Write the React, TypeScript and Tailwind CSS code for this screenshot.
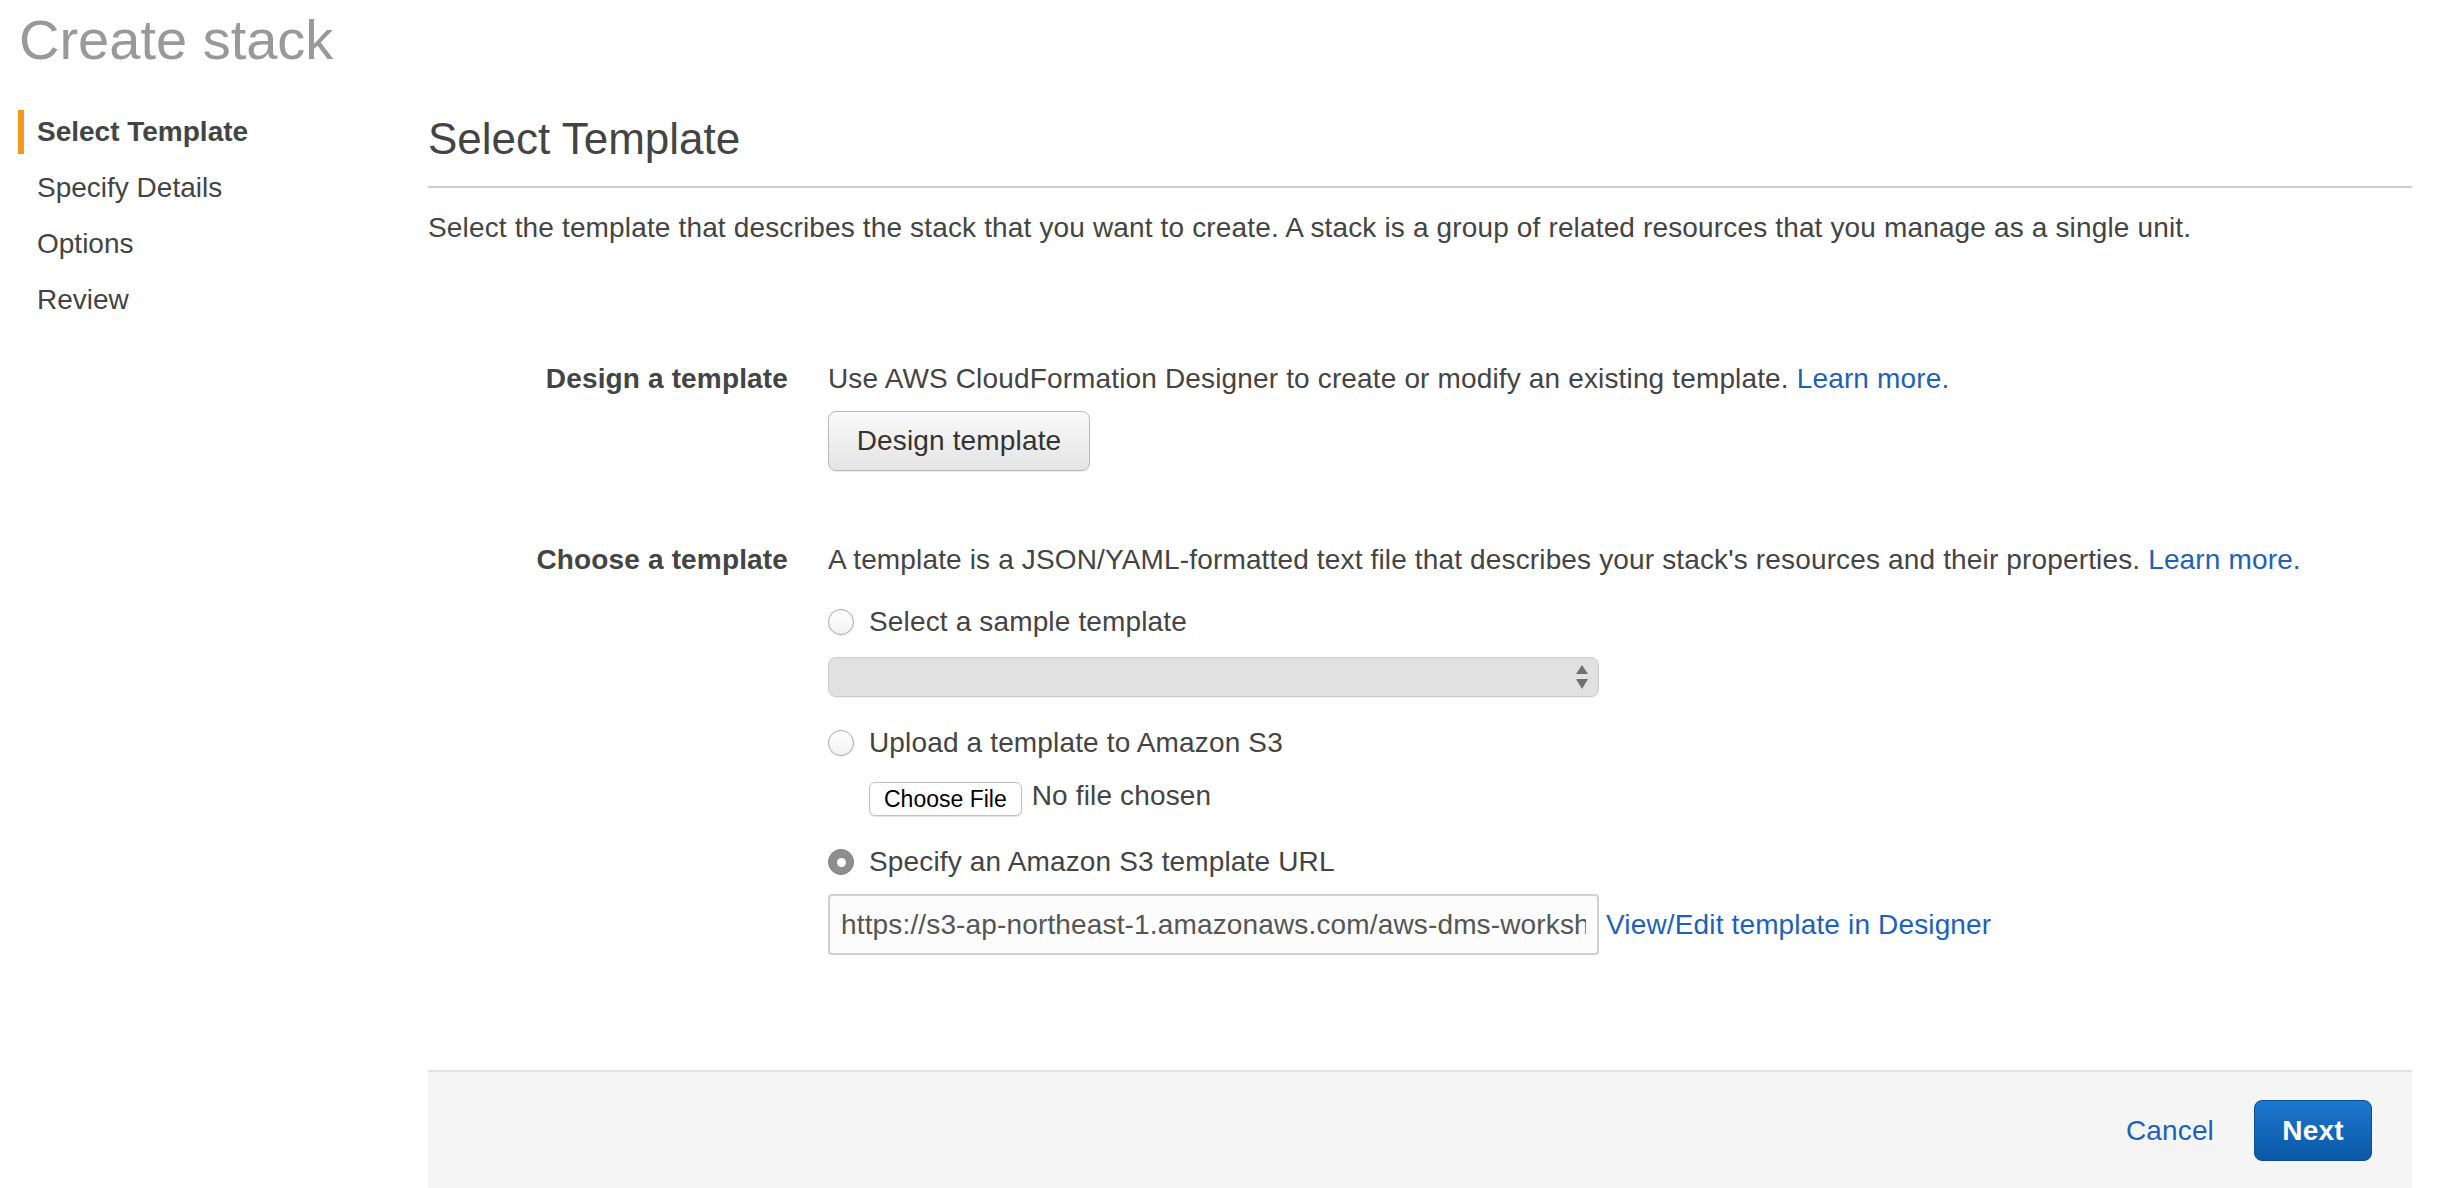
const font = "font-['Liberation_Sans',Arial,Helvetica,sans-serif]";

const steps = ["Select Template", "Specify Details", "Options", "Review"];

function Radio({ checked }: { checked?: boolean }) {
  if (checked) {
    return (
      <span className="flex h-[26px] w-[26px] shrink-0 items-center justify-center rounded-full border border-[#7f7f7f] bg-[#8e8e8e]">
        <span className="h-[9px] w-[9px] rounded-full bg-white" />
      </span>
    );
  }
  return (
    <span className="h-[26px] w-[26px] shrink-0 rounded-full border border-[#a9a9a9] bg-gradient-to-b from-white to-[#f2f2f2] shadow-[0_1px_1px_rgba(0,0,0,0.08)]" />
  );
}

function Row({ label, children }: { label: string; children: React.ReactNode }) {
  return (
    <div className="flex gap-[40px]">
      <div className="w-[360px] shrink-0 text-right text-[28px] leading-[40px] font-bold text-[#444]">
        {label}
      </div>
      <div className="flex min-w-0 flex-1 flex-col">{children}</div>
    </div>
  );
}

export default function App() {
  return (
    <div className={`${font} min-h-screen bg-white text-[#444]`}>
      <h1 className="pl-[19px] pt-[12px] text-[56px] leading-[56px] text-[#999]">Create stack</h1>

      <div className="mt-[42px] flex">
        {/* wizard steps */}
        <nav className="flex w-[428px] shrink-0 flex-col gap-[12px] pl-[18px]">
          {steps.map((s, i) => (
            <div
              key={s}
              className={
                i === 0
                  ? "h-[44px] border-l-[6px] border-[#f7981c] pl-[13px] text-[28px] leading-[44px] font-bold text-[#444]"
                  : "h-[44px] border-l-[6px] border-transparent pl-[13px] text-[28px] leading-[44px] text-[#444]"
              }
            >
              {s}
            </div>
          ))}
        </nav>

        <main className="mr-[34px] flex-1 pt-[5px] tracking-[0.15px]">
          <h2 className="border-b-2 border-[#cccccc] pb-[23px] text-[44px] leading-[48px] tracking-normal text-[#444]">
            Select Template
          </h2>
          <p className="mt-[20px] text-[28px] leading-[40px]">
            Select the template that describes the stack that you want to create. A stack is a group of related
            resources that you manage as a single unit.
          </p>

          <div className="mt-[111px]">
            <Row label="Design a template">
              <div className="text-[28px] leading-[40px]">
                Use AWS CloudFormation Designer to create or modify an existing template.{" "}
                <a className="text-[#1e62b6]">Learn more.</a>
              </div>
              <button className="mt-[12px] h-[60px] w-[262px] rounded-[8px] border border-[#b9b9b9] bg-gradient-to-b from-[#fafafa] to-[#e4e4e4] text-[28px] text-[#333] shadow-[0_1px_1px_rgba(0,0,0,0.08)]">
                Design template
              </button>
            </Row>
          </div>

          <div className="mt-[69px]">
            <Row label="Choose a template">
              <div className="text-[28px] leading-[40px]">
                A template is a JSON/YAML-formatted text file that describes your stack's resources and their
                properties. <a className="text-[#1e62b6]">Learn more.</a>
              </div>

              <label className="mt-[22px] flex h-[40px] items-center gap-[15px] text-[28px]">
                <Radio />
                <span>Select a sample template</span>
              </label>
              <div className="mt-[15px] flex h-[40px] w-[771px] items-center justify-end rounded-[8px] border border-[#cdcdcd] bg-[#e1e1e1] pr-[9px] shadow-[0_1px_1px_rgba(0,0,0,0.06)]">
                <svg width="14" height="26" viewBox="0 0 14 26">
                  <polygon points="7,1 13,10 1,10" fill="#707070" />
                  <polygon points="1,15 13,15 7,25" fill="#707070" />
                </svg>
              </div>

              <label className="mt-[26px] flex h-[40px] items-center gap-[15px] text-[28px]">
                <Radio />
                <span>Upload a template to Amazon S3</span>
              </label>
              <div className="mt-[19px] flex items-start pl-[41px]">
                <span className="flex h-[34px] items-center rounded-[6px] border border-[#c2c2c2] bg-white px-[14px] text-[23px] tracking-normal text-black shadow-[0_1px_1px_rgba(0,0,0,0.1)]">
                  Choose File
                </span>
                <span className="-mt-[3px] ml-[10px] text-[28px] leading-[34px]">No file chosen</span>
              </div>

              <label className="mt-[26px] flex h-[40px] items-center gap-[15px] text-[28px]">
                <Radio checked />
                <span>Specify an Amazon S3 template URL</span>
              </label>
              <div className="mt-[12px] flex items-center gap-[7px]">
                <input
                  readOnly
                  value="https://s3-ap-northeast-1.amazonaws.com/aws-dms-workshop/templates/dms-workshop.json"
                  className={`${font} h-[61px] w-[771px] rounded-[4px] border-2 border-[#d0d0d0] bg-[#fcfcfc] px-[11px] text-[28px] tracking-[0.15px] text-[#555] outline-none`}
                />
                <a className="text-[28px] text-[#1e62b6]">View/Edit template in Designer</a>
              </div>
            </Row>
          </div>

          <footer className="mt-[115px] flex items-center justify-end gap-[40px] border-t-2 border-[#e3e3e3] bg-[#f5f5f5] px-[40px] pb-[28px] pt-[28px]">
            <a className="text-[28px] text-[#1e62b6]">Cancel</a>
            <button className="h-[61px] w-[118px] rounded-[8px] border border-[#0b4f95] bg-gradient-to-b from-[#1d77cf] to-[#0b58a6] text-[28px] font-bold text-white">
              Next
            </button>
          </footer>
        </main>
      </div>
    </div>
  );
}
